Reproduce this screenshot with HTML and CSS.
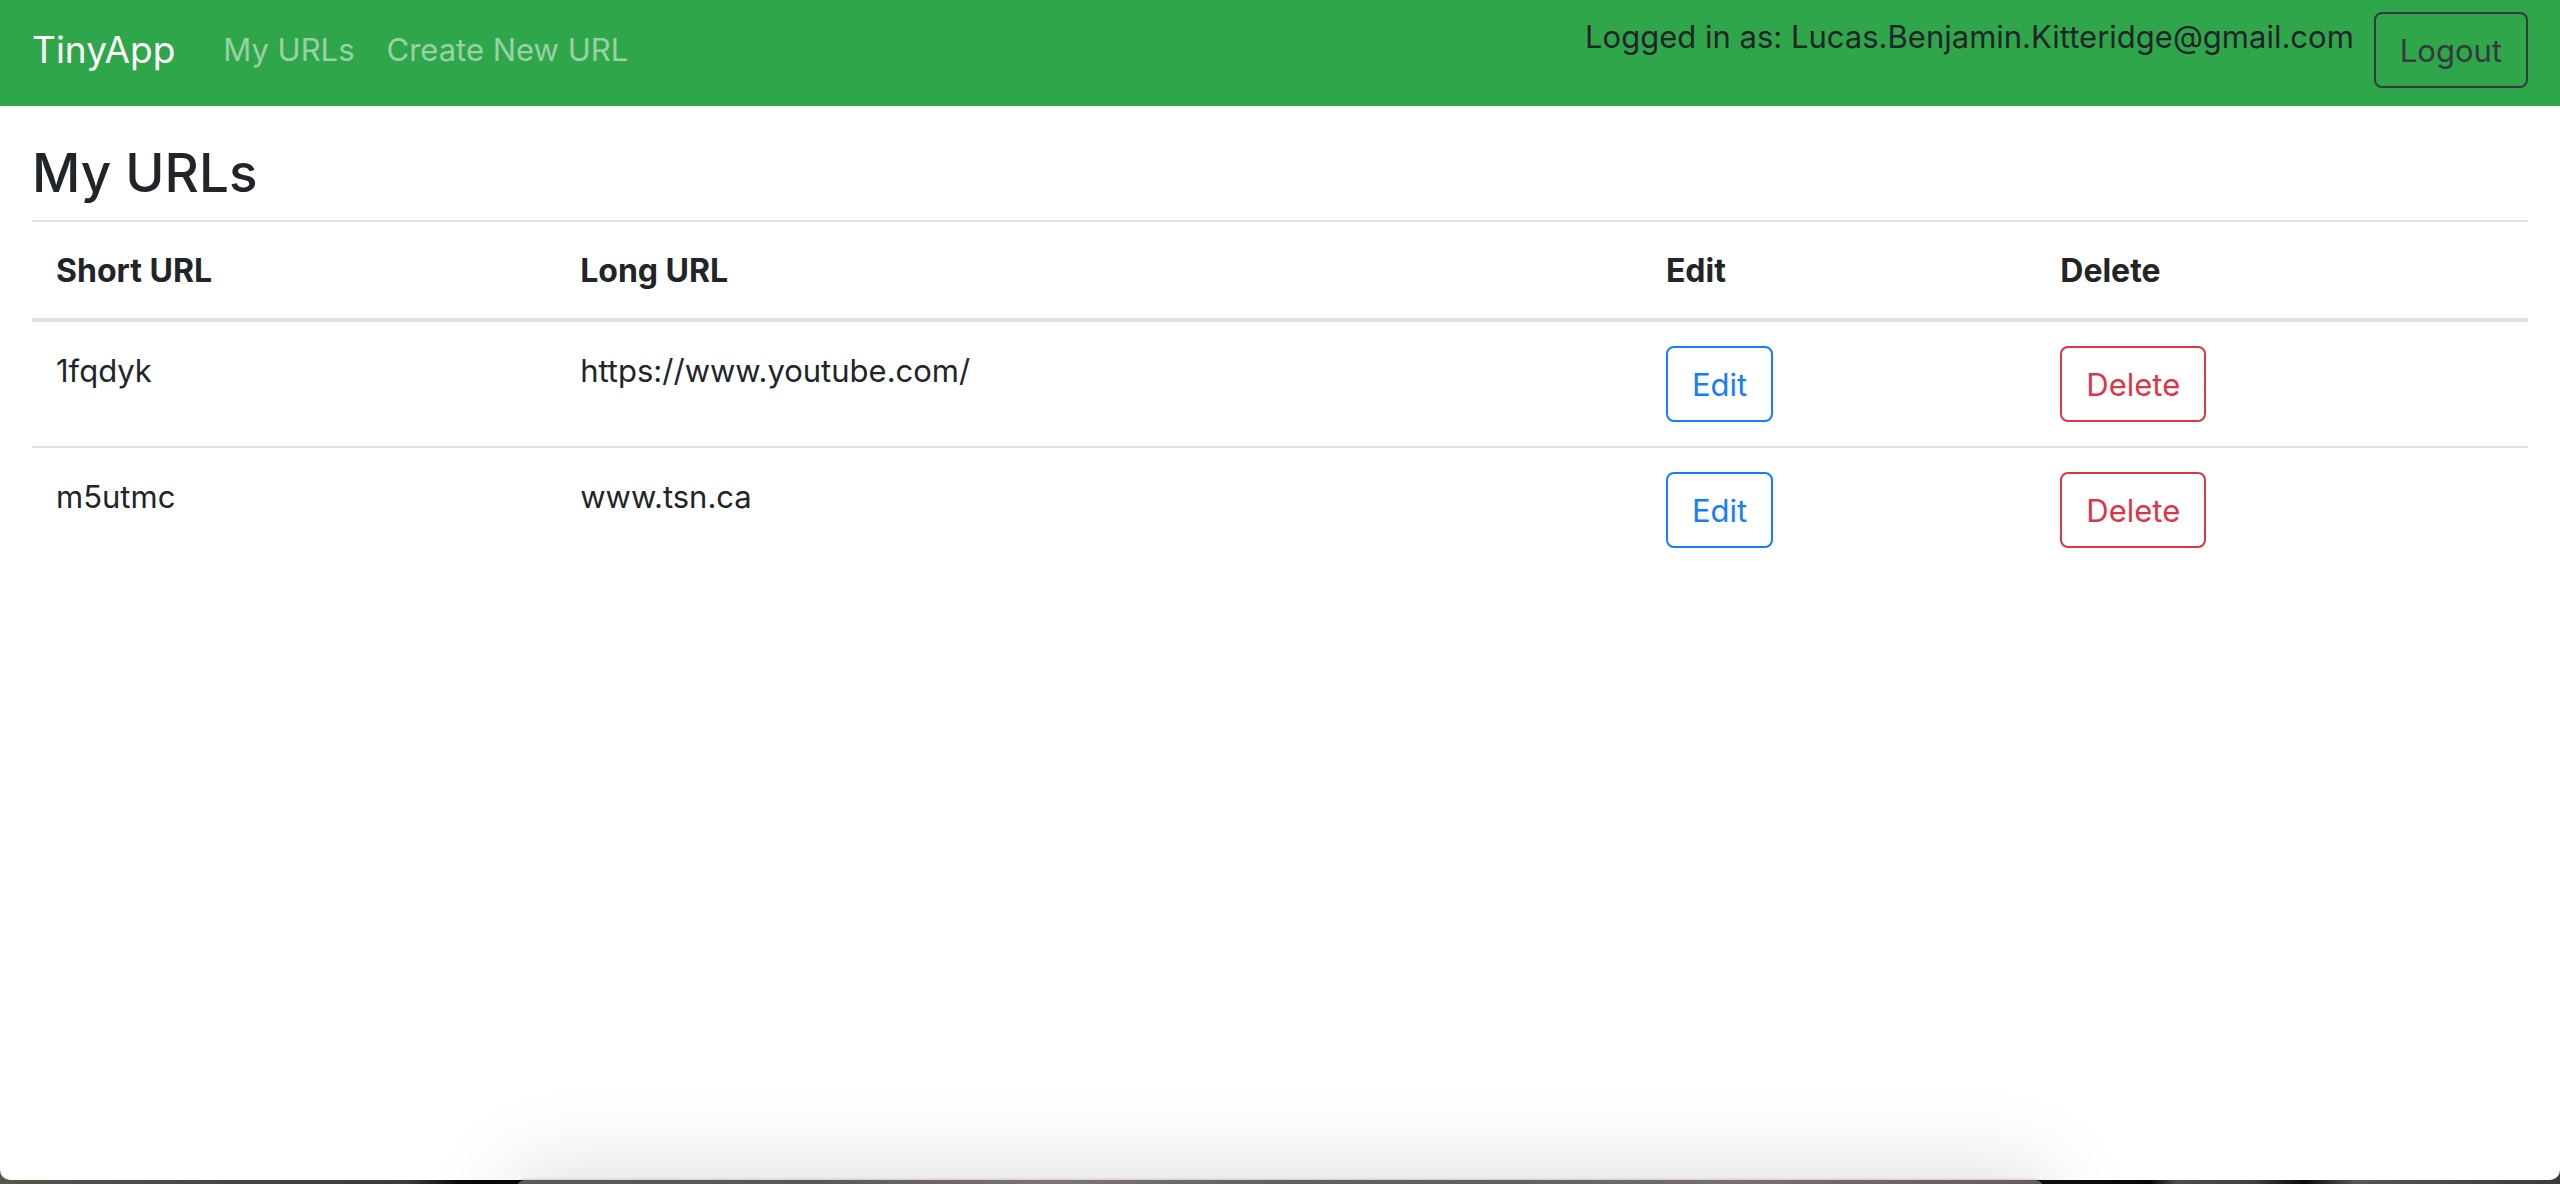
FILE: index.html
```html
<!DOCTYPE html>
<html lang="en">
<head>
<meta charset="utf-8">
<meta name="viewport" content="width=device-width, initial-scale=1">
<title>TinyApp</title>
<link rel="stylesheet" href="styles.css">
</head>
<body>
<div class="window">
  <header class="navbar">
    <a class="brand" href="#">TinyApp</a>
    <nav class="nav">
      <a class="nav-link" href="#">My URLs</a>
      <a class="nav-link" href="#">Create New URL</a>
    </nav>
    <form class="session">
      <span>Logged in as: Lucas.Benjamin.Kitteridge@gmail.com</span>
      <button class="btn btn-dark" type="button">Logout</button>
    </form>
  </header>
  <main class="content">
    <h1 class="title">My URLs</h1>
    <table class="table">
      <thead>
        <tr>
          <th class="col-short" scope="col">Short URL</th>
          <th class="col-long" scope="col">Long URL</th>
          <th class="col-edit" scope="col">Edit</th>
          <th scope="col">Delete</th>
        </tr>
      </thead>
      <tbody>
        <tr>
          <td>1fqdyk</td>
          <td>https://www.youtube.com/</td>
          <td><button class="btn btn-primary" type="button">Edit</button></td>
          <td><button class="btn btn-danger" type="button">Delete</button></td>
        </tr>
        <tr>
          <td>m5utmc</td>
          <td>www.tsn.ca</td>
          <td><button class="btn btn-primary" type="button">Edit</button></td>
          <td><button class="btn btn-danger" type="button">Delete</button></td>
        </tr>
      </tbody>
    </table>
  </main>
</div>
<div class="dock"></div>
</body>
</html>
```
FILE: styles.css
```css
* {
  box-sizing: border-box;
}

body {
  margin: 0;
  min-height: 100vh;
  display: flex;
  flex-direction: column;
  padding-bottom: 4px;
  background: linear-gradient(90deg, #55564c 0%, #3a3b36 16%, #08080a 18%, #101010 80%, #08080c 84%, #504a48 85%, #45403f 88%, #08080c 90%, #5a5452 92%, #3f3a39 100%);
  color: #212529;
  font-family: Inter, "Liberation Sans", sans-serif;
  font-size: 31px;
  line-height: 50px;
}

.window {
  flex: 1;
  background: #fff;
  border-radius: 0 0 10px 10px;
}

.navbar {
  display: flex;
  align-items: center;
  padding: 12px 32px 18px;
  background: #30a64a;
}

.brand {
  margin-right: 32px;
  color: #fff;
  font-size: 37px;
  line-height: 60px;
  text-decoration: none;
}

.nav {
  display: flex;
}

.nav-link {
  padding: 0 16px;
  color: rgba(255, 255, 255, 0.5);
  text-decoration: none;
}

.session {
  display: flex;
  align-items: flex-start;
  gap: 20px;
  margin-left: auto;
}

.btn {
  display: block;
  padding: 12px 24px 10px;
  border: 2px solid currentColor;
  border-radius: 8px;
  background: transparent;
  font: inherit;
}

.btn-dark {
  color: #343a40;
}

.btn-primary {
  color: #147efb;
}

.btn-danger {
  color: #dc3545;
}

.content {
  padding: 34px 32px;
}

.title {
  margin: 0 0 14px;
  font-size: 53px;
  font-weight: 500;
  line-height: 66px;
}

.table {
  width: 100%;
  table-layout: fixed;
  border-spacing: 0;
}

.table th,
.table td {
  padding: 24px;
  text-align: left;
  vertical-align: top;
}

.table th {
  padding-bottom: 22px;
  border-top: 2px solid #dee2e6;
  border-bottom: 4px solid #dee2e6;
  font-size: 32px;
  font-weight: 700;
}

.table tr + tr td {
  border-top: 2px solid #dee2e6;
}

.col-short {
  width: 21%;
}

.col-long {
  width: 43.5%;
}

.col-edit {
  width: 15.8%;
}

/* Top edge of the dock, with its shadow cast over the window */
.dock {
  position: fixed;
  bottom: -156px;
  left: 20.2%;
  right: 20.2%;
  height: 160px;
  border-radius: 8px;
  background: linear-gradient(90deg, #59595a, #5d5758 20%, #7f7577 35%, #625f60 50%, #5f615f 65%, #7a706c 80%, #655a5e);
  box-shadow: 0 0 3px rgba(0, 0, 0, 0.3), 0 0 90px 6px rgba(0, 0, 0, 0.14);
}
```
